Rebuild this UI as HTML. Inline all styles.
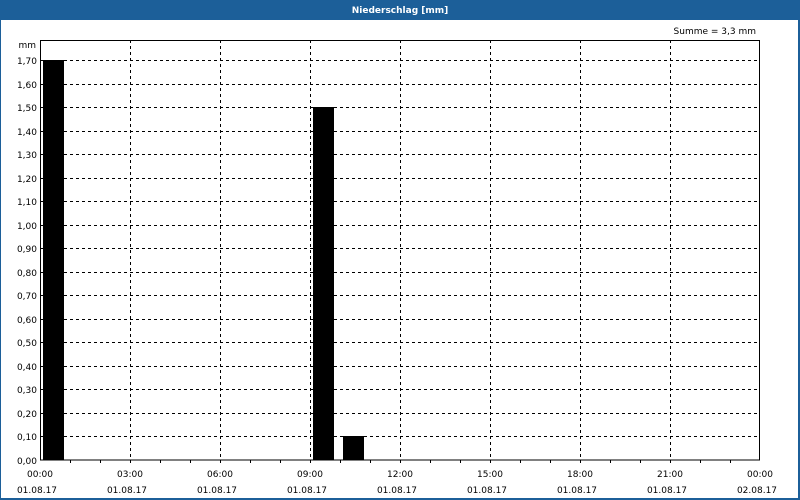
<!DOCTYPE html>
<html><head><meta charset="utf-8"><style>
html,body{margin:0;padding:0;width:800px;height:500px;overflow:hidden;background:#fff}
svg{display:block}
text{font-family:"DejaVu Sans","Liberation Sans",sans-serif;font-size:9px;fill:#000}
</style></head><body>
<svg width="800" height="500" xmlns="http://www.w3.org/2000/svg">
<rect x="0" y="0" width="800" height="500" fill="#1c5f99"/>
<rect x="1" y="20" width="797" height="478" fill="#fff"/>
<text x="400" y="13" text-anchor="middle" style="fill:#fff;font-weight:bold;font-size:9px">Niederschlag [mm]</text>
<text x="756" y="34" text-anchor="end">Summe = 3,3 mm</text>
<text x="36" y="48" text-anchor="end">mm</text>
<g id="grid" stroke="#000" stroke-width="1" stroke-dasharray="3,3" shape-rendering="crispEdges">
<script>/* none */</script>
</g>
<g shape-rendering="crispEdges" stroke="#000" stroke-dasharray="3,3">
<line x1="130.5" y1="40" x2="130.5" y2="460"/><line x1="220.5" y1="40" x2="220.5" y2="460"/><line x1="310.5" y1="40" x2="310.5" y2="460"/><line x1="400.5" y1="40" x2="400.5" y2="460"/><line x1="490.5" y1="40" x2="490.5" y2="460"/><line x1="580.5" y1="40" x2="580.5" y2="460"/><line x1="670.5" y1="40" x2="670.5" y2="460"/>
<line x1="40" y1="436.5" x2="760" y2="436.5"/><line x1="40" y1="413.5" x2="760" y2="413.5"/><line x1="40" y1="389.5" x2="760" y2="389.5"/><line x1="40" y1="366.5" x2="760" y2="366.5"/><line x1="40" y1="342.5" x2="760" y2="342.5"/><line x1="40" y1="319.5" x2="760" y2="319.5"/><line x1="40" y1="295.5" x2="760" y2="295.5"/><line x1="40" y1="272.5" x2="760" y2="272.5"/><line x1="40" y1="248.5" x2="760" y2="248.5"/><line x1="40" y1="225.5" x2="760" y2="225.5"/><line x1="40" y1="201.5" x2="760" y2="201.5"/><line x1="40" y1="178.5" x2="760" y2="178.5"/><line x1="40" y1="154.5" x2="760" y2="154.5"/><line x1="40" y1="131.5" x2="760" y2="131.5"/><line x1="40" y1="107.5" x2="760" y2="107.5"/><line x1="40" y1="84.5" x2="760" y2="84.5"/><line x1="40" y1="60.5" x2="760" y2="60.5"/>
</g>
<g fill="#000" shape-rendering="crispEdges">
<rect x="43" y="60" width="21" height="400"/>
<rect x="313" y="107" width="21" height="353"/>
<rect x="343" y="436" width="21" height="24"/>
</g>
<rect x="40.5" y="40.5" width="719" height="419.5" fill="none" stroke="#000" shape-rendering="crispEdges"/>
<g stroke="#000" shape-rendering="crispEdges">
<line x1="70.5" y1="460" x2="70.5" y2="463"/><line x1="100.5" y1="460" x2="100.5" y2="463"/><line x1="130.5" y1="460" x2="130.5" y2="463"/><line x1="160.5" y1="460" x2="160.5" y2="463"/><line x1="190.5" y1="460" x2="190.5" y2="463"/><line x1="220.5" y1="460" x2="220.5" y2="463"/><line x1="250.5" y1="460" x2="250.5" y2="463"/><line x1="280.5" y1="460" x2="280.5" y2="463"/><line x1="310.5" y1="460" x2="310.5" y2="463"/><line x1="340.5" y1="460" x2="340.5" y2="463"/><line x1="370.5" y1="460" x2="370.5" y2="463"/><line x1="400.5" y1="460" x2="400.5" y2="463"/><line x1="430.5" y1="460" x2="430.5" y2="463"/><line x1="460.5" y1="460" x2="460.5" y2="463"/><line x1="490.5" y1="460" x2="490.5" y2="463"/><line x1="520.5" y1="460" x2="520.5" y2="463"/><line x1="550.5" y1="460" x2="550.5" y2="463"/><line x1="580.5" y1="460" x2="580.5" y2="463"/><line x1="610.5" y1="460" x2="610.5" y2="463"/><line x1="640.5" y1="460" x2="640.5" y2="463"/><line x1="670.5" y1="460" x2="670.5" y2="463"/><line x1="700.5" y1="460" x2="700.5" y2="463"/><line x1="730.5" y1="460" x2="730.5" y2="463"/>
</g>
<g text-anchor="end">
<text x="37" y="464">0,00</text><text x="37" y="440">0,10</text><text x="37" y="417">0,20</text><text x="37" y="393">0,30</text><text x="37" y="370">0,40</text><text x="37" y="346">0,50</text><text x="37" y="323">0,60</text><text x="37" y="299">0,70</text><text x="37" y="276">0,80</text><text x="37" y="252">0,90</text><text x="37" y="229">1,00</text><text x="37" y="205">1,10</text><text x="37" y="182">1,20</text><text x="37" y="158">1,30</text><text x="37" y="135">1,40</text><text x="37" y="111">1,50</text><text x="37" y="88">1,60</text><text x="37" y="64">1,70</text>
</g>
<g text-anchor="middle">
<text x="40" y="477">00:00</text><text x="130" y="477">03:00</text><text x="220" y="477">06:00</text><text x="310" y="477">09:00</text><text x="400" y="477">12:00</text><text x="490" y="477">15:00</text><text x="580" y="477">18:00</text><text x="670" y="477">21:00</text><text x="760" y="477">00:00</text>
<text x="37" y="493">01.08.17</text><text x="127" y="493">01.08.17</text><text x="217" y="493">01.08.17</text><text x="307" y="493">01.08.17</text><text x="397" y="493">01.08.17</text><text x="487" y="493">01.08.17</text><text x="577" y="493">01.08.17</text><text x="667" y="493">01.08.17</text><text x="757" y="493">02.08.17</text>
</g>
</svg>
</body></html>
